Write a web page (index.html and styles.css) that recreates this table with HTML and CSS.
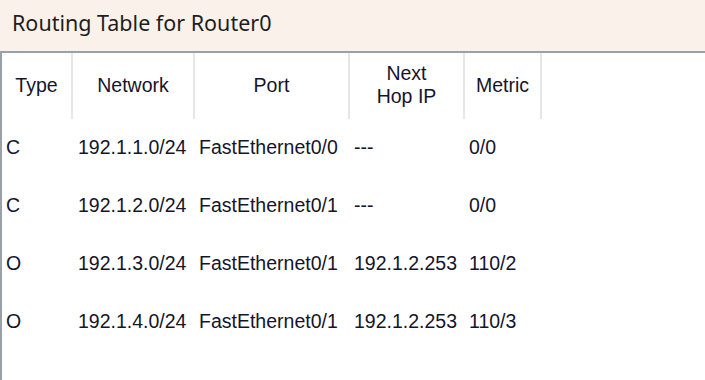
FILE: index.html
```html
<!DOCTYPE html>
<html>
<head>
<meta charset="utf-8">
<link rel="stylesheet" href="styles.css">
</head>
<body>
<div class="window">
  <div class="titlebar">Routing Table for Router0</div>
  <div class="panel">
    <div class="table">
      <div class="th">Type</div>
      <div class="th">Network</div>
      <div class="th">Port</div>
      <div class="th">Next<br>Hop IP</div>
      <div class="th">Metric</div>
      <div class="th empty"></div>

      <div class="td">C</div>
      <div class="td">192.1.1.0/24</div>
      <div class="td">FastEthernet0/0</div>
      <div class="td">---</div>
      <div class="td">0/0</div>
      <div class="td"></div>

      <div class="td">C</div>
      <div class="td">192.1.2.0/24</div>
      <div class="td">FastEthernet0/1</div>
      <div class="td">---</div>
      <div class="td">0/0</div>
      <div class="td"></div>

      <div class="td">O</div>
      <div class="td">192.1.3.0/24</div>
      <div class="td">FastEthernet0/1</div>
      <div class="td">192.1.2.253</div>
      <div class="td">110/2</div>
      <div class="td"></div>

      <div class="td">O</div>
      <div class="td">192.1.4.0/24</div>
      <div class="td">FastEthernet0/1</div>
      <div class="td">192.1.2.253</div>
      <div class="td">110/3</div>
      <div class="td"></div>
    </div>
  </div>
</div>
</body>
</html>
```
FILE: styles.css
```css
html, body {
  margin: 0;
  padding: 0;
  background: #ffffff;
}
.window {
  width: 705px;
  height: 380px;
  display: flex;
  flex-direction: column;
  overflow: hidden;
}
.titlebar {
  flex: none;
  box-sizing: border-box;
  height: 53px;
  background: #f9f1ea;
  border-bottom: 2px solid #9aa0a8;
  padding: 8px 0 0 12px;
  font-family: "Noto Sans", "Open Sans", sans-serif;
  font-size: 21.5px;
  color: #1e1e1e;
}
.panel {
  flex: 1;
  border-left: 2px solid #9aa0a8;
  background: #ffffff;
}
.table {
  display: grid;
  grid-template-columns: 71px 122px 155px 115px 77px 1fr;
  grid-template-rows: 66px repeat(4, 58px);
  font-family: "Liberation Sans", Arial, sans-serif;
  font-size: 19.5px;
  color: #15152a;
}
.th {
  display: flex;
  align-items: center;
  justify-content: center;
  text-align: center;
  line-height: 23px;
  border-right: 2px solid #e6e6e6;
  padding-bottom: 2px;
}
.th.empty {
  border-right: none;
}
.td {
  display: flex;
  align-items: center;
  padding-left: 4px;
  white-space: nowrap;
  padding-bottom: 2px;
}
.td:nth-child(6n+2) {
  padding-left: 5px;
}
```
